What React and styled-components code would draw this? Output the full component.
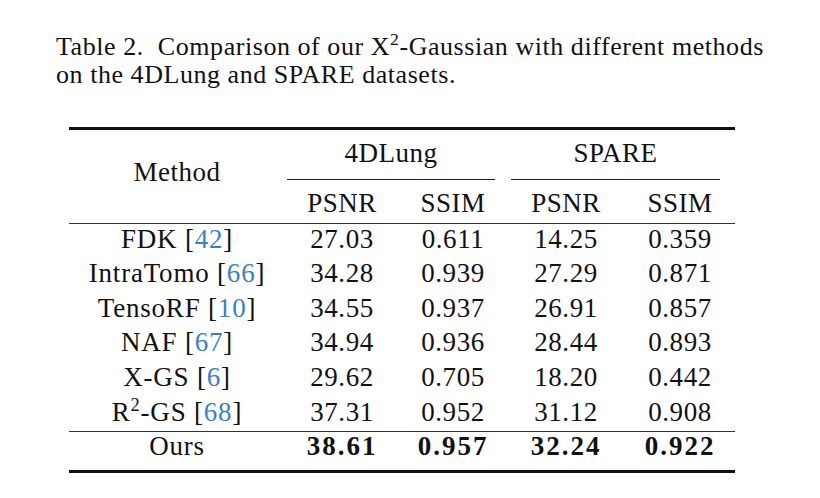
import styled, { createGlobalStyle } from "styled-components";

const GlobalStyle = createGlobalStyle`
  body {
    margin: 0;
    background: #fff;
    color: #111;
    font-family: "Liberation Serif", "Times New Roman", serif;
  }
`;

const Page = styled.div`
  width: 820px;
  height: 498px;
  background: #fff;
  overflow: hidden;
`;

const Caption = styled.p`
  margin: 0;
  padding: 33px 0 0 56px;
  width: 740px;
  font-size: 26px;
  line-height: 28px;
  letter-spacing: 0.55px;
  color: #111;
`;

const Sup = styled.sup`
  font-size: 0.68em;
  line-height: 0;
  vertical-align: 0.55em;
`;

const Table = styled.table`
  margin: 38px 0 0 69px;
  width: 666px;
  border-collapse: collapse;
  table-layout: fixed;
  font-size: 27px;
  border-top: 3px solid #111;
  border-bottom: 3px solid #111;
`;

const HeadRow = styled.tr`
  height: ${(p) => p.$h}px;
`;

const Th = styled.th`
  font-weight: normal;
  padding: 0 0 ${(p) => p.$pb || 0}px;
  text-align: center;
  vertical-align: ${(p) => p.$valign || "middle"};
  white-space: nowrap;
  letter-spacing: 0.5px;
`;

const GroupLabel = styled.div`
  margin: 0 ${(p) => p.$right}px 0 ${(p) => p.$left}px;
  padding: 9px 0 12px;
  line-height: 28px;
  border-bottom: 1px solid #222;
`;

const SubHead = styled.tr`
  height: 43px;
  border-bottom: 1.5px solid #333;
  th {
    padding-top: 4px;
  }
`;

const Row = styled.tr`
  height: 34.7px;
  border-top: ${(p) => (p.$ruled ? "1.5px solid #333" : "none")};
`;

const Td = styled.td`
  padding: 0 0 4px;
  text-align: center;
  line-height: 28px;
  letter-spacing: ${(p) => (p.$bold ? "2px" : "0.6px")};
  white-space: nowrap;
  font-weight: ${(p) => (p.$bold ? "bold" : "normal")};
`;

const MethodCell = styled(Td)`
  letter-spacing: 0.8px;
`;

const Cite = styled.span`
  color: #3b80bf;
`;

const OursRow = styled(Row)`
  height: 40px;
  td {
    padding-bottom: 10px;
  }
`;

const rows = [
  { name: "FDK", cite: 42, v: ["27.03", "0.611", "14.25", "0.359"] },
  { name: "IntraTomo", cite: 66, v: ["34.28", "0.939", "27.29", "0.871"] },
  { name: "TensoRF", cite: 10, v: ["34.55", "0.937", "26.91", "0.857"] },
  { name: "NAF", cite: 67, v: ["34.94", "0.936", "28.44", "0.893"] },
  { name: "X-GS", cite: 6, v: ["29.62", "0.705", "18.20", "0.442"] },
  { name: "R", sup: "2", rest: "-GS", cite: 68, v: ["37.31", "0.952", "31.12", "0.908"] },
];

function App() {
  return (
    <Page>
      <GlobalStyle />
      <Caption>
        Table 2.&nbsp; Comparison of our X<Sup>2</Sup>-Gaussian with different methods
        <br />
        on the 4DLung and SPARE datasets.
      </Caption>
      <Table>
        <colgroup>
          <col style={{ width: 216 }} />
          <col style={{ width: 114 }} />
          <col style={{ width: 108 }} />
          <col style={{ width: 118 }} />
          <col style={{ width: 110 }} />
        </colgroup>
        <thead>
          <HeadRow $h={50}>
            <Th rowSpan={2} $pb={8}>Method</Th>
            <Th colSpan={2} $valign="bottom">
              <GroupLabel $left={2} $right={12}>4DLung</GroupLabel>
            </Th>
            <Th colSpan={2} $valign="bottom">
              <GroupLabel $left={4} $right={15}>SPARE</GroupLabel>
            </Th>
          </HeadRow>
          <SubHead>
            <Th>PSNR</Th>
            <Th>SSIM</Th>
            <Th>PSNR</Th>
            <Th>SSIM</Th>
          </SubHead>
        </thead>
        <tbody>
          {rows.map((r, i) => (
            <Row key={i}>
              <MethodCell>
                {r.name}
                {r.sup ? <Sup>{r.sup}</Sup> : null}
                {r.rest}
                {" ["}
                <Cite>{r.cite}</Cite>]
              </MethodCell>
              {r.v.map((val, j) => (
                <Td key={j}>{val}</Td>
              ))}
            </Row>
          ))}
          <OursRow $ruled>
            <MethodCell>Ours</MethodCell>
            <Td $bold>38.61</Td>
            <Td $bold>0.957</Td>
            <Td $bold>32.24</Td>
            <Td $bold>0.922</Td>
          </OursRow>
        </tbody>
      </Table>
    </Page>
  );
}

export default App;
